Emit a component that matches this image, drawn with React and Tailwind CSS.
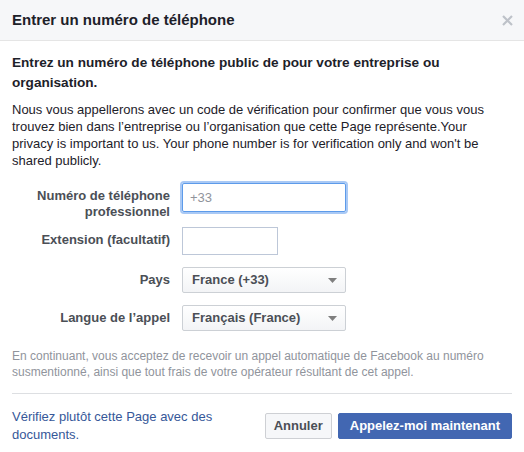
import { useState } from "react";

const font = { fontFamily: '"Liberation Sans", Arial, Helvetica, sans-serif' };

function Caret() {
  return (
    <svg width="9" height="5" viewBox="0 0 9 5" className="shrink-0">
      <path d="M0 0 L9 0 L4.5 5 Z" fill="#7f7f7f" />
    </svg>
  );
}

function Row({ label, children, className = "" }) {
  return (
    <div className={`flex ${className}`}>
      <div className="w-[158px] shrink-0 text-right text-[13px] font-bold leading-[16px] text-[#4b4f56] pt-[5px]">
        {label}
      </div>
      <div className="ml-[12px]">{children}</div>
    </div>
  );
}

function Select({ value }) {
  return (
    <div className="w-[164px] h-[26px] flex items-center justify-between pl-[9px] pr-[8px] border border-[#ccd0d5] rounded-[2px] bg-gradient-to-b from-white to-[#f3f4f6] text-[13px] font-bold text-[#4b4f56]">
      <span>{value}</span>
      <Caret />
    </div>
  );
}

export default function App() {
  const [phone, setPhone] = useState("");
  const [ext, setExt] = useState("");

  return (
    <div className="w-[524px] h-[452px] bg-white flex flex-col overflow-hidden" style={font}>
      {/* en-tête */}
      <header className="h-[41px] shrink-0 flex items-center justify-between pl-[12px] pr-[11px] bg-[#f6f7f9] border-b border-[#e5e5e5]">
        <h1 className="text-[15px] font-bold text-[#1d2129]">Entrer un numéro de téléphone</h1>
        <svg width="11" height="11" viewBox="0 0 11 11">
          <path d="M1 1 L10 10 M10 1 L1 10" stroke="#bec2c9" strokeWidth="2.2" />
        </svg>
      </header>

      <main className="shrink-0 px-[12px] pt-[12px]">
        <p className="max-w-[470px] text-[13.6px] font-bold leading-[20px] text-[#1d2129]">
          Entrez un numéro de téléphone public de pour votre entreprise ou organisation.
        </p>
        <p className="mt-[8px] max-w-[484px] text-[13px] leading-[17px] text-[#1d2129]">
          Nous vous appellerons avec un code de vérification pour confirmer que vous vous trouvez bien dans l’entreprise ou l’organisation que cette Page représente.Your privacy is important to us. Your phone number is for verification only and won't be shared publicly.
        </p>

        <Row label={<>Numéro de téléphone<br />professionnel</>} className="mt-[14px]">
          <input
            value={phone}
            onChange={(e) => setPhone(e.target.value)}
            placeholder="+33"
            className="w-[164px] h-[29px] px-[7px] text-[13px] text-[#1d2129] placeholder:text-[#90949c] border border-[#5d9bea] rounded-[2px] outline-none shadow-[0_0_0_2px_#a9c9f5]"
          />
        </Row>

        <Row label="Extension (facultatif)" className="mt-[7px]">
          <input
            value={ext}
            onChange={(e) => setExt(e.target.value)}
            className="w-[96px] h-[28px] px-[7px] text-[13px] border border-[#bdc7d8] outline-none"
          />
        </Row>

        <Row label="Pays" className="mt-[12px]">
          <Select value="France (+33)" />
        </Row>

        <Row label="Langue de l’appel" className="mt-[12px]">
          <Select value="Français (France)" />
        </Row>

        <p className="mt-[17px] text-[12px] leading-[16px] text-[#90949c]">
          En continuant, vous acceptez de recevoir un appel automatique de Facebook au numéro susmentionné, ainsi que tout frais de votre opérateur résultant de cet appel.
        </p>
      </main>

      {/* pied */}
      <footer className="mx-[12px] mt-[13px] h-[60px] pt-[4px] shrink-0 border-t border-[#dddfe2] flex items-center justify-between">
        <a href="#" className="w-[220px] text-[13px] leading-[18px] text-[#365899]">
          Vérifiez plutôt cette Page avec des documents.
        </a>
        <div className="flex gap-[6px]">
          <button className="h-[26px] px-[8px] border border-[#ced0d4] rounded-[2px] bg-[#f6f7f9] text-[13px] font-bold text-[#4b4f56]">
            Annuler
          </button>
          <button className="h-[26px] px-[11px] border border-[#4267b2] rounded-[2px] bg-[#4267b2] text-[13px] font-bold text-white">
            Appelez-moi maintenant
          </button>
        </div>
      </footer>
    </div>
  );
}
